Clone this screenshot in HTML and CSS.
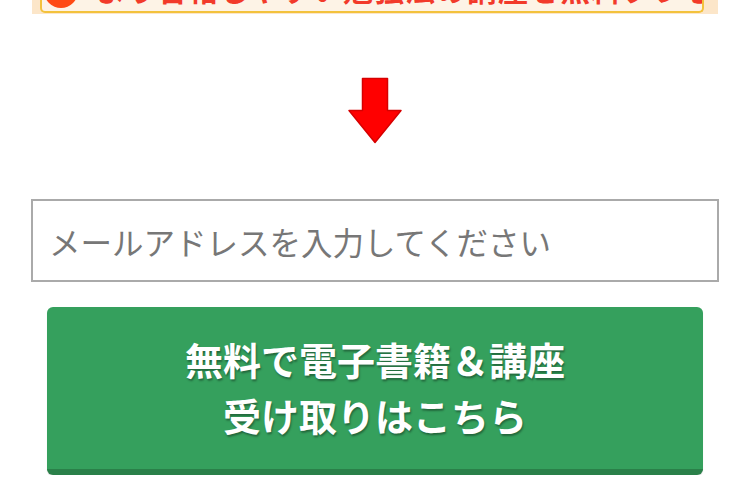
FILE: index.html
```html
<!DOCTYPE html>
<html lang="ja">
<head>
<meta charset="utf-8">
<link rel="stylesheet" href="styles.css">
</head>
<body>
<div class="page">
  <div class="banner">
    <div class="banner-inner">
      <span class="badge"></span>
      <span class="banner-text">より合格しやすい勉強法の講座を無料プレゼント！</span>
    </div>
  </div>
  <div class="arrow-wrap">
    <svg class="arrow" width="56" height="68" viewBox="0 0 56 68">
      <path d="M15.5 1.5 H40.5 V33.5 H54 L28 65.5 L2 33.5 H15.5 Z" fill="#ff0000" stroke="#d60000" stroke-width="1.5" stroke-linejoin="round"/>
    </svg>
  </div>
  <div class="field">
    <input class="email" type="text" placeholder="メールアドレスを入力してください">
  </div>
  <button class="cta" type="button">
    <span class="cta-line">無料で電子書籍＆講座</span>
    <span class="cta-line">受け取りはこちら</span>
  </button>
</div>
</body>
</html>
```

FILE: styles.css
```css
html, body {
  margin: 0;
  padding: 0;
  background: #ffffff;
  font-family: "Noto Sans CJK JP", "Noto Sans", sans-serif;
}

.page {
  width: 750px;
  display: flex;
  flex-direction: column;
  align-items: center;
}

.banner {
  width: 686px;
  height: 14px;
  background: #fce6c9;
  margin-left: -1px;
  display: flex;
  justify-content: center;
  overflow: hidden;
}

.banner-inner {
  position: relative;
  width: 664px;
  height: 13px;
  margin-left: -5px;
  background: #fdf3e6;
  border: 2px solid #f3c23c;
  border-top: none;
  border-radius: 0 0 5px 5px;
  box-sizing: border-box;
  overflow: hidden;
  display: flex;
  align-items: flex-end;
}

.badge {
  position: absolute;
  left: 2px;
  top: -26px;
  width: 34px;
  height: 34px;
  border-radius: 50%;
  background: #ff4a14;
}

.banner-text {
  position: absolute;
  left: 54px;
  top: -30px;
  font-size: 30px;
  line-height: 36px;
  font-weight: 700;
  color: #f23a2a;
  white-space: nowrap;
  letter-spacing: 1px;
}

.arrow-wrap {
  margin-top: 63px;
  height: 68px;
  display: flex;
  justify-content: center;
}

.arrow {
  display: block;
}

.field {
  margin-top: 54px;
  width: 688px;
}

.email {
  display: block;
  width: 100%;
  height: 83px;
  box-sizing: border-box;
  border: 2px solid #aaaaaa;
  padding: 0 0 0 16px;
  margin: 0;
  font-family: "Noto Sans CJK JP", "Noto Sans", sans-serif;
  font-size: 31.5px;
  font-weight: 400;
  color: #333;
  background: #fff;
  outline: none;
}

.email::placeholder {
  color: #777777;
}

.cta {
  margin-top: 25px;
  width: 656px;
  height: 168px;
  box-sizing: border-box;
  border: none;
  border-radius: 6px;
  background: #35a05d;
  border-bottom: 6px solid #2a8049;
  box-shadow: 0 1px 1px rgba(0,0,0,0.15);
  display: flex;
  flex-direction: column;
  align-items: center;
  justify-content: center;
  padding: 0 0 2px 0;
  cursor: pointer;
  font-family: "Noto Sans CJK JP", "Noto Sans", sans-serif;
}

.cta-line {
  display: block;
  color: #ffffff;
  font-size: 38px;
  font-weight: 700;
  line-height: 56px;
  text-shadow: 1px 2px 2px rgba(0, 0, 0, 0.35);
}
```
